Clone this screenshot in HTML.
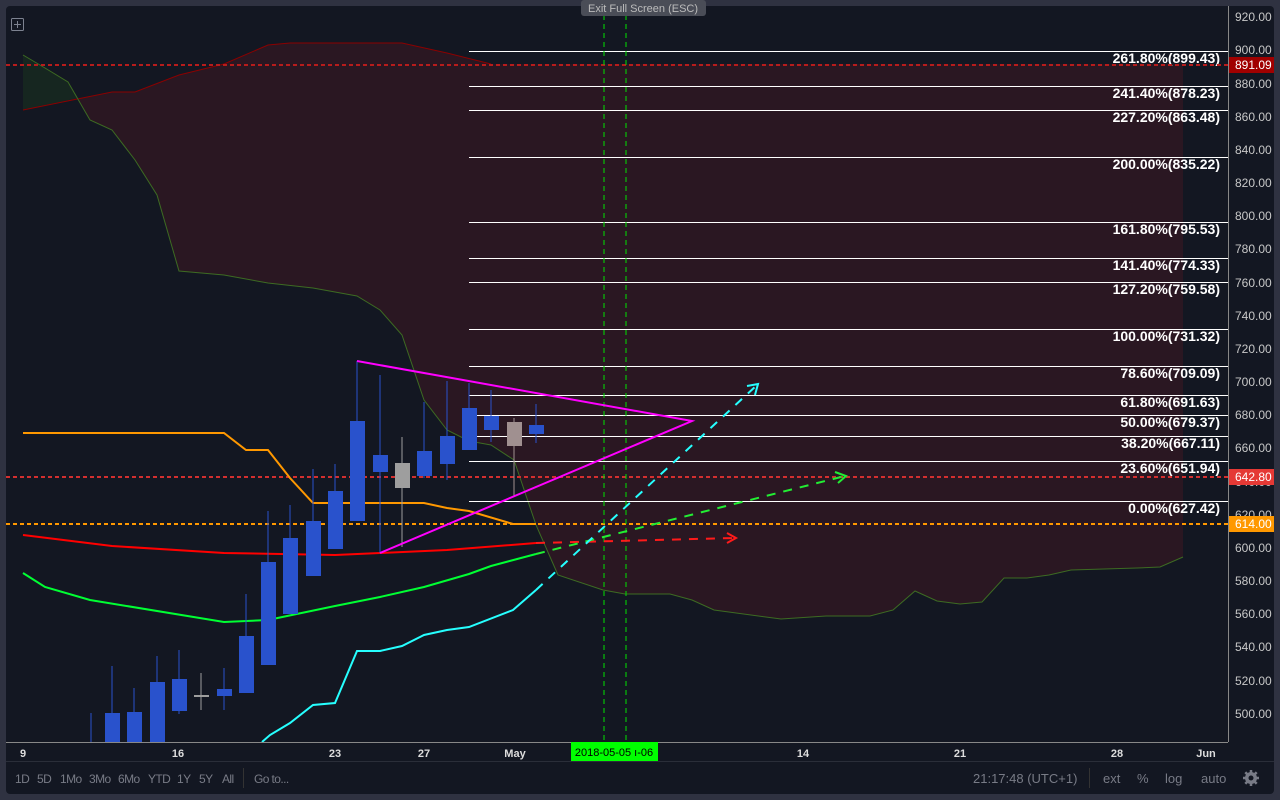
<!DOCTYPE html>
<html><head><style>
body{margin:0;background:#2f3241;width:1280px;height:800px;overflow:hidden;font-family:"Liberation Sans",sans-serif}
svg{position:absolute;left:0;top:0}
</style></head><body>
<svg width="1280" height="800" xmlns="http://www.w3.org/2000/svg" font-family="Liberation Sans, sans-serif">
<rect x="6" y="6" width="1268" height="788" rx="4" fill="#131722"/>
<!-- cloud -->
<polygon points="23,110 112,92 135,92 179,75 224,64 268,45 290,43 402,43 447,53 491,64 1183,64 1183,557 1160,567 1137,568 1071,570 1049,575 1027,578 1004,578 982,602 960,604 937,601 915,591 893,610 870,616 826,616 781,619 714,610 692,600 670,594 625,594 603,590 558,575 536,525 514,460 491,445 469,441 447,430 424,400 402,335 380,310 357,296 313,288 268,283 224,275 179,271 157,195 135,160 112,130 90,120 78,98" fill="#2a1722"/>
<polygon points="23,55 45,68 68,82 78,98 23,110" fill="#162620"/>
<polyline points="23,110 112,92 135,92 179,75 224,64 268,45 290,43 402,43 447,53 491,64" fill="none" stroke="#8b0000" stroke-width="1"/>
<polyline points="23,55 45,68 68,82 90,120 112,130 135,160 157,195 179,271 224,275 268,283 313,288 357,296 380,310 402,335 424,400 447,430 469,441 491,445 514,460 536,525 558,575 603,590 625,594 670,594 692,600 714,610 781,619 826,616 870,616 893,610 915,591 937,601 960,604 982,602 1004,578 1027,578 1049,575 1071,570 1137,568 1160,567 1183,557" fill="none" stroke="#3d6b22" stroke-width="1"/>
<!-- fib lines -->
<g stroke="#ffffff" stroke-width="1">
<line x1="469" y1="51.5" x2="1228" y2="51.5"/><line x1="469" y1="86.5" x2="1228" y2="86.5"/><line x1="469" y1="110.5" x2="1228" y2="110.5"/><line x1="469" y1="157.5" x2="1228" y2="157.5"/><line x1="469" y1="222.5" x2="1228" y2="222.5"/><line x1="469" y1="258.5" x2="1228" y2="258.5"/><line x1="469" y1="282.5" x2="1228" y2="282.5"/><line x1="469" y1="329.5" x2="1228" y2="329.5"/><line x1="469" y1="366.5" x2="1228" y2="366.5"/><line x1="469" y1="395.5" x2="1228" y2="395.5"/><line x1="469" y1="415.5" x2="1228" y2="415.5"/><line x1="469" y1="436.5" x2="1228" y2="436.5"/><line x1="469" y1="461.5" x2="1228" y2="461.5"/><line x1="469" y1="501.5" x2="1228" y2="501.5"/>
</g>
<g fill="#ffffff" font-size="14" font-weight="bold" text-anchor="end">
<text x="1220" y="63">261.80%(899.43)</text><text x="1220" y="98">241.40%(878.23)</text><text x="1220" y="122">227.20%(863.48)</text><text x="1220" y="169">200.00%(835.22)</text><text x="1220" y="234">161.80%(795.53)</text><text x="1220" y="270">141.40%(774.33)</text><text x="1220" y="294">127.20%(759.58)</text><text x="1220" y="341">100.00%(731.32)</text><text x="1220" y="378">78.60%(709.09)</text><text x="1220" y="407">61.80%(691.63)</text><text x="1220" y="427">50.00%(679.37)</text><text x="1220" y="448">38.20%(667.11)</text><text x="1220" y="473">23.60%(651.94)</text><text x="1220" y="513">0.00%(627.42)</text>
</g>
<!-- horizontal dashed -->
<line x1="6" y1="65" x2="1228" y2="65" stroke="#b71c1c" stroke-width="2" stroke-dasharray="4,3"/>
<line x1="6" y1="477" x2="1228" y2="477" stroke="#d32f2f" stroke-width="2" stroke-dasharray="4,3"/>
<line x1="6" y1="524" x2="1228" y2="524" stroke="#ff9800" stroke-width="2" stroke-dasharray="4,3"/>
<!-- verticals -->
<line x1="604" y1="6" x2="604" y2="742" stroke="#00e000" stroke-dasharray="5,4"/>
<line x1="626" y1="6" x2="626" y2="742" stroke="#00e000" stroke-dasharray="5,4"/>
<!-- MAs -->
<polyline points="23,433 224,433 246,450 268,450 290,478 313,503 424,503 447,508 469,511 513,524 536,524" fill="none" stroke="#ff9800" stroke-width="2"/>
<polyline points="23,535 112,546 224,553 335,555 380,553 447,550 536,543" fill="none" stroke="#ff0000" stroke-width="2"/>
<polyline points="23,573 45,587 90,600 224,622 268,620 335,606 380,597 424,587 469,574 491,566 536,554" fill="none" stroke="#00ff33" stroke-width="2"/>
<polyline points="262,742 270,735 290,723 313,705 335,703 357,651 380,651 402,646 424,635 447,630 469,627 513,610 536,590" fill="none" stroke="#26ffff" stroke-width="2"/>
<line x1="536" y1="543" x2="735" y2="538" stroke="#ff1a1a" stroke-width="2" stroke-dasharray="9,8"/>
<polyline points="727,533 736,538 727,543" fill="none" stroke="#ff1a1a" stroke-width="2"/>
<line x1="536" y1="554" x2="845" y2="476" stroke="#22ee33" stroke-width="2" stroke-dasharray="9,8"/>
<polyline points="835,472 846,476 838,483" fill="none" stroke="#22ee33" stroke-width="2"/>
<line x1="536" y1="590" x2="757" y2="385" stroke="#26ffff" stroke-width="2" stroke-dasharray="9,8"/>
<polyline points="747,386 758,384 755,395" fill="none" stroke="#26ffff" stroke-width="2"/>
<!-- candles -->
<g fill="#2952cc" stroke="#2952cc">
<line x1="91" y1="713" x2="91" y2="742"/>
<line x1="112" y1="666" x2="112" y2="742"/><rect x="105" y="713" width="15" height="29" stroke="none"/>
<line x1="134" y1="688" x2="134" y2="742"/><rect x="127" y="712" width="15" height="30" stroke="none"/>
<line x1="157" y1="656" x2="157" y2="742"/><rect x="150" y="682" width="15" height="60" stroke="none"/>
<line x1="179" y1="650" x2="179" y2="714"/><rect x="172" y="679" width="15" height="32" stroke="none"/>
<line x1="224" y1="668" x2="224" y2="710"/><rect x="217" y="689" width="15" height="7" stroke="none"/>
<line x1="246" y1="594" x2="246" y2="693"/><rect x="239" y="636" width="15" height="57" stroke="none"/>
<line x1="268" y1="511" x2="268" y2="665"/><rect x="261" y="562" width="15" height="103" stroke="none"/>
<line x1="290" y1="505" x2="290" y2="614"/><rect x="283" y="538" width="15" height="76" stroke="none"/>
<line x1="313" y1="469" x2="313" y2="576"/><rect x="306" y="521" width="15" height="55" stroke="none"/>
<line x1="335" y1="464" x2="335" y2="549"/><rect x="328" y="491" width="15" height="58" stroke="none"/>
<line x1="357" y1="361" x2="357" y2="521"/><rect x="350" y="421" width="15" height="100" stroke="none"/>
<line x1="380" y1="375" x2="380" y2="553"/><rect x="373" y="455" width="15" height="17" stroke="none"/>
<line x1="424" y1="402" x2="424" y2="478"/><rect x="417" y="451" width="15" height="25" stroke="none"/>
<line x1="447" y1="381" x2="447" y2="480"/><rect x="440" y="436" width="15" height="28" stroke="none"/>
<line x1="469" y1="383" x2="469" y2="450"/><rect x="462" y="408" width="15" height="42" stroke="none"/>
<line x1="491" y1="390" x2="491" y2="442"/><rect x="484" y="416" width="15" height="14" stroke="none"/>
<line x1="536" y1="404" x2="536" y2="443"/><rect x="529" y="425" width="15" height="9" stroke="none"/>
</g>
<g stroke="#9e9e9e" fill="#9e9e9e">
<line x1="201" y1="673" x2="201" y2="710"/><line x1="194" y1="696" x2="209" y2="696" stroke-width="2"/>
<line x1="402" y1="437" x2="402" y2="547"/><rect x="395" y="463" width="15" height="25" stroke="none"/>
<line x1="514" y1="418" x2="514" y2="497" stroke="#a09090"/><rect x="507" y="422" width="15" height="24" fill="#a09090" stroke="none"/>
</g>
<polyline points="357,361 692,421 380,553" fill="none" stroke="#ff00ff" stroke-width="2"/>
<!-- price axis -->
<line x1="1228.5" y1="6" x2="1228.5" y2="742" stroke="#888"/>
<g fill="#c8c8c8" font-size="12">
<text x="1235" y="21">920.00</text><text x="1235" y="54">900.00</text><text x="1235" y="88">880.00</text><text x="1235" y="121">860.00</text><text x="1235" y="154">840.00</text><text x="1235" y="187">820.00</text><text x="1235" y="220">800.00</text><text x="1235" y="253">780.00</text><text x="1235" y="287">760.00</text><text x="1235" y="320">740.00</text><text x="1235" y="353">720.00</text><text x="1235" y="386">700.00</text><text x="1235" y="419">680.00</text><text x="1235" y="452">660.00</text><text x="1235" y="486">640.00</text><text x="1235" y="519">620.00</text><text x="1235" y="552">600.00</text><text x="1235" y="585">580.00</text><text x="1235" y="618">560.00</text><text x="1235" y="651">540.00</text><text x="1235" y="685">520.00</text><text x="1235" y="718">500.00</text>
</g>
<rect x="1229" y="57" width="45" height="16" fill="#a00000"/><text x="1235" y="69" fill="#fff" font-size="12">891.09</text>
<rect x="1229" y="469" width="45" height="16" fill="#e53935"/><text x="1235" y="481" fill="#fff" font-size="12">642.80</text>
<rect x="1229" y="516" width="45" height="16" fill="#ff9800"/><text x="1235" y="528" fill="#fff" font-size="12">614.00</text>
<!-- time axis -->
<line x1="6" y1="742.5" x2="1228" y2="742.5" stroke="#888"/>
<line x1="6" y1="761.5" x2="1274" y2="761.5" stroke="#2a2e39"/>
<g fill="#ddd" font-size="11" font-weight="bold" text-anchor="middle">
<text x="23" y="757">9</text><text x="178" y="757">16</text><text x="335" y="757">23</text><text x="424" y="757">27</text><text x="515" y="757">May</text><text x="803" y="757">14</text><text x="960" y="757">21</text><text x="1117" y="757">28</text><text x="1206" y="757">Jun</text>
</g>
<rect x="571" y="742" width="87" height="19" fill="#00ff00"/>
<text x="614" y="756" font-size="11" fill="#000" text-anchor="middle">2018-05-05 ı-06</text>
<!-- toolbar -->
<g fill="#787b86" font-size="12" letter-spacing="-0.6">
<text x="15" y="783">1D</text><text x="37" y="783">5D</text><text x="60" y="783">1Mo</text><text x="89" y="783">3Mo</text><text x="118" y="783">6Mo</text><text x="148" y="783">YTD</text><text x="177" y="783">1Y</text><text x="199" y="783">5Y</text><text x="222" y="783">All</text><text x="254" y="783">Go to...</text>
</g>
<g fill="#787b86" font-size="13">
<text x="973" y="783">21:17:48 (UTC+1)</text>
<text x="1103" y="783">ext</text><text x="1137" y="783">%</text><text x="1165" y="783">log</text><text x="1201" y="783">auto</text>
</g>
<line x1="243.5" y1="768" x2="243.5" y2="788" stroke="#333"/>
<line x1="1089.5" y1="768" x2="1089.5" y2="788" stroke="#333"/>
<g transform="translate(1251,778)" fill="#787b86"><circle r="6"/>
<g stroke="#787b86" stroke-width="2.5"><line x1="0" y1="-8" x2="0" y2="8"/><line x1="-8" y1="0" x2="8" y2="0"/><line x1="-5.7" y1="-5.7" x2="5.7" y2="5.7"/><line x1="-5.7" y1="5.7" x2="5.7" y2="-5.7"/></g><circle r="2.5" fill="#131722"/></g>
<!-- top -->
<rect x="11.5" y="18.5" width="12" height="12" fill="none" stroke="#7d8290" rx="1"/>
<line x1="17.5" y1="21" x2="17.5" y2="28" stroke="#7d8290"/><line x1="14" y1="24.5" x2="21" y2="24.5" stroke="#7d8290"/>
<rect x="581" y="0" width="125" height="16" rx="3" fill="#4a4d57"/>
<text x="643" y="12" font-size="11" fill="#bbb" text-anchor="middle">Exit Full Screen (ESC)</text>
</svg>
</body></html>
